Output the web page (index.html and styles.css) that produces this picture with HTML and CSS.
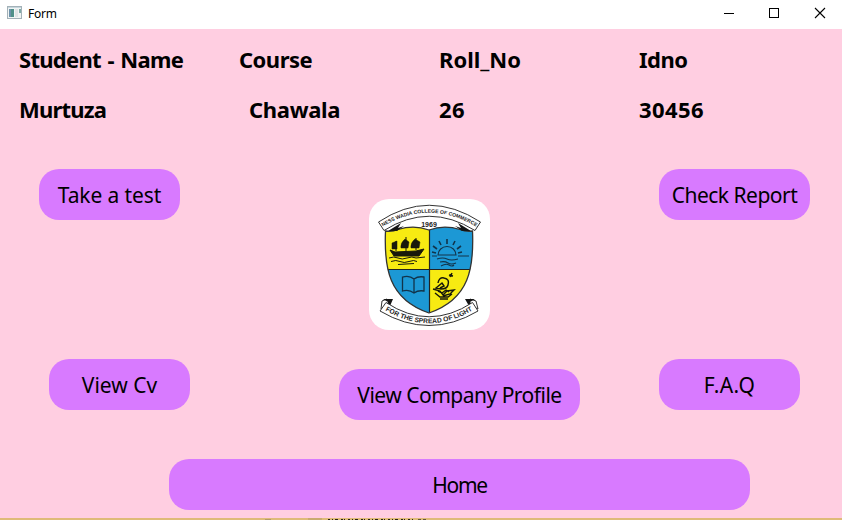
FILE: index.html
```html
<!DOCTYPE html>
<html lang="en">
<head>
<meta charset="utf-8">
<title>Form</title>
<link rel="stylesheet" href="styles.css">
</head>
<body>
<div class="window">
  <header class="titlebar">
    <svg class="app-icon" width="16" height="14" viewBox="0 0 16 14">
      <rect x=".5" y=".5" width="14" height="12" fill="#f0f4f4" stroke="#a3b1b8"/>
      <path d="M1 1.500h13" stroke="#c5d5dc"/>
      <rect x="2" y="3" width="5" height="8" fill="#4f9089"/>
      <rect x="2" y="3" width="2" height="8" fill="#6d91aa"/>
      <rect x="8" y="3" width="3" height="8" fill="#dfe3e5"/>
      <rect x="12" y="3" width="2" height="4" fill="#7faaa8"/>
    </svg>
    <span class="title">Form</span>
    <div class="controls">
      <svg width="46" height="29" viewBox="0 0 46 29"><path d="M20 13.500h10" stroke="#000"/></svg>
      <svg width="46" height="29" viewBox="0 0 46 29"><rect x="19.500" y="8.500" width="9" height="9" fill="none" stroke="#000"/></svg>
      <svg width="46" height="29" viewBox="0 0 46 29"><path d="M19 8l10 10M29 8l-10 10" stroke="#000" stroke-width="1.100"/></svg>
    </div>
  </header>
  <main class="form">
    <section class="details">
      <span class="student">Student - Name</span><span>Course</span><span class="wide">Roll_No</span><span>Idno</span>
      <span class="tight">Murtuza</span><span class="surname">Chawala</span><span class="digits">26</span><span class="digits">30456</span>
    </section>
    <section class="actions">
      <div class="column left">
        <button class="btn test">Take a test</button>
        <button class="btn cv">View Cv</button>
      </div>
      <div class="column middle">
        <svg class="crest" width="121" height="131" viewBox="369 199 121 131">
          <defs>
            <clipPath id="shield"><path d="M385.500 231Q392 232 398 229.500Q414 224.500 429 230Q444 224.500 460 229.500Q466 232 472.500 231C474 267 470 299 429 313C388 299 384 267 385.500 231Z"/></clipPath>
            <path id="top-arc" d="M383 226.500Q429 199 476 226.500"/>
            <path id="bottom-arc" d="M384 309.500Q429 337 474 309.500"/>
          </defs>
          <rect x="369" y="199" width="121" height="131" rx="20" fill="#fff"/>
          <g clip-path="url(#shield)">
            <path d="M380 220h49v49h-49zM429 269h50v50h-50z" fill="#f7eb12"/>
            <path d="M429 220h50v49h-50zM380 269h49v50h-49z" fill="#1c98d5"/>
            <path d="M429.500 220v95M380 269.500h98" stroke="#222" stroke-width="1.200"/>
          </g>
          <path d="M385.500 231Q392 232 398 229.500Q414 224.500 429 230Q444 224.500 460 229.500Q466 232 472.500 231C474 267 470 299 429 313C388 299 384 267 385.500 231Z" fill="none" stroke="#333" stroke-width="1.300"/>
          <path d="M388 231l13-8-3 5 6-2-7 5zM471 231l-13-8 3 5-6-2 7 5z" fill="#151515"/>
          <path d="M378.500 222Q429 188.500 480.500 222L475 230.500Q429 202 384 230.500Z" fill="#fff" stroke="#333"/>
          <text class="motto top"><textPath href="#top-arc" startOffset="50%">NESS WADIA COLLEGE OF COMMERCE</textPath></text>
          <text class="year" x="429" y="227">1969</text>
          <g fill="#19190b" stroke="#19190b">
            <path d="M390 250l5 2 21-1 8-2-5 7h-25z"/>
            <path d="M396 251v-10M406 251v-14M416 250v-12" fill="none"/>
            <path d="M392 249v-6l5-2v8zM401 248q-1-5 4-9l4 3-1 6zM411 248q-1-5 4-9l5 3-1 6z" stroke-width=".5"/>
            <path d="M389 258q5-2 9 0t9 0t9 0l9-1M391 261.500q5-2 9 0t9 0t8 0M398 264.500l16-1" fill="none"/>
          </g>
          <g fill="none" stroke="#12334a" stroke-width="1.100">
            <path d="M438 255a9 8.500 0 0 1 18 0z"/>
            <path d="M447 244v-5M441 245l-2-4M437 249l-4-3M453 245l2-4M457 249l4-3M436 253l-4-1M458 253l4-1" stroke-width="1.600"/>
            <path d="M432 256h5M458 256h11M437 259q6-2 10 0t11 0M440 262q5-1 8 1t8 0M441 266q5-3 8-1t5 0"/>
            <path d="M402.500 277q7-2 11.500 2 4-3 10-2v14q-6-1-10 2-5-4-11.500-2zM414 279v14" stroke-width="1.300"/>
          </g>
          <g fill="none" stroke="#17170b" stroke-width="1.500">
            <path d="M438 283q1-6 6-5 6 1 4 7-1 4-7 4l-5-1 6-5 2 3-4 2M449 275l4 1 M450 277l2-4"/>
            <path d="M433 289l7 2 3 4 4-4 7-1-4 4-7 2M435 293l5 4h8l4-3M438 291l4 2 4-3 3 2M440 299h8" stroke-width="1.400"/>
          </g>
          <path d="M387 299l-5 2-1 8 6-3 2-4M470 299l6 2 2 8-7-3-2-4" fill="#fff" stroke="#333"/>
          <path d="M383 299h10l-3 7-4-1 2-3zM475 299h-10l4 7 4-1-3-3z" fill="#151515"/>
          <path d="M386 302.500Q429 331 472.500 302.500L478 311Q429 340 380 311Z" fill="#fff" stroke="#333"/>
          <text class="motto"><textPath href="#bottom-arc" startOffset="50%">FOR THE SPREAD OF LIGHT</textPath></text>
        </svg>
        <button class="btn company">View Company Profile</button>
      </div>
      <div class="column right">
        <button class="btn report">Check Report</button>
        <button class="btn faq">F.A.Q</button>
      </div>
    </section>
    <button class="btn home">Home</button>
  </main>
  <footer class="edge">
    <svg width="842" height="2" viewBox="0 0 842 2">
      <path d="M265 1.500h6M308 1h14" stroke="#b49a68"/>
      <path d="M328 1.500h86" stroke="#2c2519" stroke-dasharray="2 2 1 2 3 3 2 1 1 3"/>
      <path d="M418 1.500h9" stroke="#66563a" stroke-dasharray="3 2"/>
    </svg>
  </footer>
</div>
</body>
</html>
```

FILE: styles.css
```css
* { box-sizing: border-box; }
body { margin: 0; font-family: "Noto Sans", sans-serif; color: #000; }
.window { width: 842px; height: 520px; display: flex; flex-direction: column; overflow: hidden; background: #ffcee1; }
.titlebar { height: 29px; flex: none; display: flex; background: #fff; padding-left: 7px; }
.app-icon { margin-top: 6px; }
.title { margin-left: 5px; font-size: 12px; line-height: 27px; letter-spacing: -0.2px; }
.controls { display: flex; margin-left: auto; }
.controls svg { display: block; }
.form { height: 489px; flex: none; display: flex; flex-direction: column; }
.details { display: grid; grid-template-columns: 220px 200px 200px 1fr; grid-auto-rows: 50px; padding: 5px 0 0 19px; font-size: 22px; font-weight: 700; line-height: 50px; letter-spacing: -0.5px; white-space: nowrap; }
.student { letter-spacing: -0.7px; word-spacing: 1.500px; }
.surname { padding-left: 10px; letter-spacing: -0.3px; }
.wide { letter-spacing: 0; }
.tight { letter-spacing: -0.8px; }
.digits { letter-spacing: 0.4px; }
.actions { display: flex; padding: 35px 0 0 39px; height: 325px; }
.column { display: flex; flex-direction: column; }
.left { width: 151px; }
.middle { width: 241px; margin-left: 149px; padding-top: 30px; }
.right { width: 151px; margin-left: 79px; }
.crest { display: block; margin-left: 30px; }
.btn { height: 51px; flex: none; border: 0; border-radius: 20px; background: #d87aff; color: #000; padding: 2px 0 0; font: 21px/49px "Noto Sans", sans-serif; white-space: nowrap; }
.test, .cv, .faq { width: 141px; }
.test { letter-spacing: -0.1px; }
.report { width: 151px; letter-spacing: -0.5px; }
.company { width: 241px; margin-top: 39px; letter-spacing: -0.5px; }
.cv { margin: 139px 0 0 10px; }
.faq { margin-top: 139px; letter-spacing: 0.4px; }
.home { width: 581px; margin: 0 0 0 169px; letter-spacing: -1.300px; }
.edge { height: 2px; flex: none; background: #dfba78; }
.edge svg { display: block; }
.motto { font: 700 6.700px "Liberation Sans", sans-serif; fill: #222; text-anchor: middle; }
.top { font-size: 5.100px; }
.year { font: 700 7px "Liberation Sans", sans-serif; fill: #222; text-anchor: middle; }
```
